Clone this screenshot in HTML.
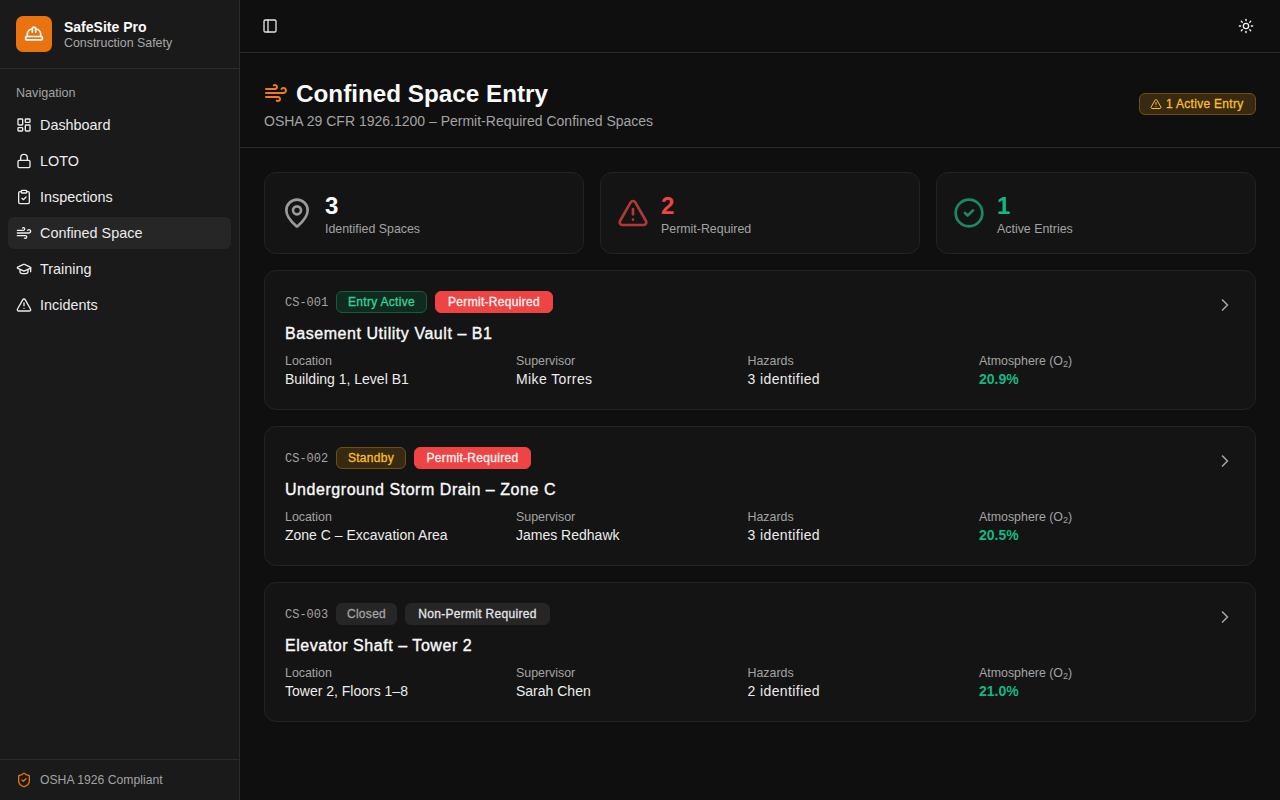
<!DOCTYPE html>
<html><head><meta charset="utf-8">
<style>
*{box-sizing:border-box;margin:0;padding:0}
html,body{width:1280px;height:800px;overflow:hidden;background:#111111;font-family:"Liberation Sans",sans-serif;color:#f5f5f5}
.abs{position:absolute}
svg{display:block;fill:none;stroke:currentColor;stroke-width:2;stroke-linecap:round;stroke-linejoin:round}
#side{position:absolute;left:0;top:0;width:240px;height:800px;background:#1a1a1a;border-right:1px solid #2b2b2b}
#main{position:absolute;left:240px;top:0;width:1040px;height:800px;background:#0f0f0f}
.hline{position:absolute;height:1px;background:#2b2b2b}
.logo{position:absolute;left:16px;top:16px;width:36px;height:36px;border-radius:7px;background:#e8730f;color:#fff}
.brand{position:absolute;left:64px;top:19px;font-size:14px;font-weight:bold;color:#fafafa;white-space:nowrap}
.brand2{position:absolute;left:64px;top:36px;font-size:12.4px;color:#a8a8a8;white-space:nowrap}
.navlbl{position:absolute;left:16px;top:86px;font-size:12.6px;color:#a3a3a3}
.nav{position:absolute;left:8px;width:223px;height:32px;border-radius:6px;color:#ececec;font-size:14.4px}
.nav.active{background:#262626}
.nav svg{position:absolute;left:8px;top:8px}
.nav span{position:absolute;left:32px;top:8px;white-space:nowrap}
.foot{position:absolute;left:40px;top:773px;font-size:12.2px;color:#a3a3a3;white-space:nowrap}

.t{position:absolute;line-height:1;white-space:nowrap}
.card{position:absolute;background:#141414;border:1px solid #222222;border-radius:12px}
.badge{position:absolute;height:22px;border-radius:6px;font-size:12px;font-weight:normal;-webkit-text-stroke:0.3px currentColor;letter-spacing:0.3px;line-height:20px;text-align:center;border:1px solid transparent;white-space:nowrap}
.b-green{background:#0f2a1f;border-color:#1b5a3e;color:#34d399}
.b-red{background:#ef4444;border-color:#ef4444;color:#fff5f5}
.b-amber{background:#382a12;border-color:#6e5014;color:#fbbf24}
.b-grey{background:#262626;border-color:#262626;color:#a3a3a3}
.b-grey2{background:#262626;border-color:#262626;color:#e5e5e5}
.sb{font-weight:normal;-webkit-text-stroke:0.35px currentColor}
.mono{font-family:"Liberation Mono",monospace}
.lbl{font-size:12.4px;color:#a3a3a3}
.val{font-size:14px;color:#ececec}
</style></head>
<body>
<div id="side">
  <div class="logo"><svg class="abs" style="left:8px;top:8px" width="20" height="20" viewBox="0 0 24 24"><path d="M2 18a1 1 0 0 0 1 1h18a1 1 0 0 0 1-1v-2a1 1 0 0 0-1-1H3a1 1 0 0 0-1 1v2z"/><path d="M10 10V5a1 1 0 0 1 1-1h2a1 1 0 0 1 1 1v5"/><path d="M4 15v-3a6 6 0 0 1 6-6"/><path d="M14 6a6 6 0 0 1 6 6v3"/></svg></div>
  <div class="brand">SafeSite Pro</div>
  <div class="brand2">Construction Safety</div>
  <div class="hline" style="left:0;top:68px;width:239px"></div>
  <div class="navlbl">Navigation</div>
  <div class="nav" style="top:109px"><svg width="16" height="16" viewBox="0 0 24 24"><rect width="7" height="9" x="3" y="3" rx="1"/><rect width="7" height="5" x="14" y="3" rx="1"/><rect width="7" height="9" x="14" y="12" rx="1"/><rect width="7" height="5" x="3" y="16" rx="1"/></svg><span>Dashboard</span></div>
  <div class="nav" style="top:145px"><svg width="16" height="16" viewBox="0 0 24 24"><rect width="18" height="11" x="3" y="11" rx="2" ry="2"/><path d="M7 11V7a5 5 0 0 1 10 0v4"/></svg><span>LOTO</span></div>
  <div class="nav" style="top:181px"><svg width="16" height="16" viewBox="0 0 24 24"><rect width="8" height="4" x="8" y="2" rx="1" ry="1"/><path d="M16 4h2a2 2 0 0 1 2 2v14a2 2 0 0 1-2 2H6a2 2 0 0 1-2-2V6a2 2 0 0 1 2-2h2"/><path d="m9 14 2 2 4-4"/></svg><span>Inspections</span></div>
  <div class="nav active" style="top:217px"><svg width="16" height="16" viewBox="0 0 24 24"><path d="M12.8 19.6A2 2 0 1 0 14 16H2"/><path d="M17.5 8a2.5 2.5 0 1 1 2 4H2"/><path d="M9.8 4.4A2 2 0 1 1 11 8H2"/></svg><span>Confined Space</span></div>
  <div class="nav" style="top:253px"><svg width="16" height="16" viewBox="0 0 24 24"><path d="M21.42 10.922a1 1 0 0 0-.019-1.838L12.83 5.18a2 2 0 0 0-1.66 0L2.6 9.08a1 1 0 0 0 0 1.832l8.57 3.908a2 2 0 0 0 1.66 0z"/><path d="M22 10v6"/><path d="M6 12.5V16a6 3 0 0 0 12 0v-3.5"/></svg><span>Training</span></div>
  <div class="nav" style="top:289px"><svg width="16" height="16" viewBox="0 0 24 24"><path d="m21.73 18-8-14a2 2 0 0 0-3.48 0l-8 14A2 2 0 0 0 4 21h16a2 2 0 0 0 1.73-3"/><path d="M12 9v4"/><path d="M12 17h.01"/></svg><span>Incidents</span></div>
  <div class="hline" style="left:0;top:759px;width:239px"></div>
  <svg class="abs" style="left:16px;top:772px;color:#e8730f" width="16" height="16" viewBox="0 0 24 24"><path d="M20 13c0 5-3.5 7.5-7.66 8.95a1 1 0 0 1-.67-.01C7.5 20.5 4 18 4 13V6a1 1 0 0 1 1-1c2 0 4.5-1.2 6.24-2.72a1.17 1.17 0 0 1 1.52 0C14.51 3.81 17 5 19 5a1 1 0 0 1 1 1z"/><path d="m9 12 2 2 4-4"/></svg>
  <div class="foot">OSHA 1926 Compliant</div>
</div>
<div id="main">
<svg class="abs" style="left:22px;top:18px;color:#e5e5e5" width="16" height="16" viewBox="0 0 24 24"><rect width="18" height="18" x="3" y="3" rx="2"/><path d="M9 3v18"/></svg>
<svg class="abs" style="left:998px;top:18px;color:#f0f0f0" width="16" height="16" viewBox="0 0 24 24"><circle cx="12" cy="12" r="4"/><path d="M12 2v2"/><path d="M12 20v2"/><path d="m4.93 4.93 1.41 1.41"/><path d="m17.66 17.66 1.41 1.41"/><path d="M2 12h2"/><path d="M20 12h2"/><path d="m6.34 17.66-1.41 1.41"/><path d="m19.07 4.93-1.41 1.41"/></svg>
<div class="hline" style="left:0;top:52px;width:1040px"></div>
<svg class="abs" style="left:24px;top:81px;color:#f07c12" width="24" height="24" viewBox="0 0 24 24"><path d="M12.8 19.6A2 2 0 1 0 14 16H2"/><path d="M17.5 8a2.5 2.5 0 1 1 2 4H2"/><path d="M9.8 4.4A2 2 0 1 1 11 8H2"/></svg>
<div class="t" style="left:56px;top:82px;font-size:24.25px;font-weight:bold;color:#fafafa">Confined Space Entry</div>
<div class="t" style="left:24px;top:114px;font-size:14px;color:#a3a3a3">OSHA 29 CFR 1926.1200 – Permit-Required Confined Spaces</div>
<div class="badge b-amber" style="left:899px;top:93px;width:117px"><svg class="abs" style="left:10px;top:4px" width="12" height="12" viewBox="0 0 24 24"><path d="m21.73 18-8-14a2 2 0 0 0-3.48 0l-8 14A2 2 0 0 0 4 21h16a2 2 0 0 0 1.73-3"/><path d="M12 9v4"/><path d="M12 17h.01"/></svg><span style="position:absolute;left:26px;top:0">1 Active Entry</span></div>
<div class="hline" style="left:0;top:147px;width:1040px"></div>
<div class="card" style="left:24px;top:172px;width:320px;height:82px"></div>
<svg class="abs" style="left:41px;top:197px;color:#9a9a9a" width="32" height="32" viewBox="0 0 24 24"><path d="M20 10c0 4.993-5.539 10.193-7.399 11.799a1 1 0 0 1-1.202 0C9.539 20.193 4 14.993 4 10a8 8 0 0 1 16 0"/><circle cx="12" cy="10" r="3"/></svg>
<div class="t" style="left:85px;top:194px;font-size:24px;font-weight:bold;color:#fafafa">3</div>
<div class="t lbl" style="left:85px;top:223px">Identified Spaces</div>
<div class="card" style="left:360px;top:172px;width:320px;height:82px"></div>
<svg class="abs" style="left:377px;top:197px;color:#b23838" width="32" height="32" viewBox="0 0 24 24"><path d="m21.73 18-8-14a2 2 0 0 0-3.48 0l-8 14A2 2 0 0 0 4 21h16a2 2 0 0 0 1.73-3"/><path d="M12 9v4"/><path d="M12 17h.01"/></svg>
<div class="t" style="left:421px;top:194px;font-size:24px;font-weight:bold;color:#ef4444">2</div>
<div class="t lbl" style="left:421px;top:223px">Permit-Required</div>
<div class="card" style="left:696px;top:172px;width:320px;height:82px"></div>
<svg class="abs" style="left:713px;top:197px;color:#1a8a62" width="32" height="32" viewBox="0 0 24 24"><circle cx="12" cy="12" r="10"/><path d="m9 12 2 2 4-4"/></svg>
<div class="t" style="left:757px;top:194px;font-size:24px;font-weight:bold;color:#10b981">1</div>
<div class="t lbl" style="left:757px;top:223px">Active Entries</div>
<div class="card" style="left:24px;top:270px;width:992px;height:140px"></div>
<div class="t mono" style="left:45px;top:297px;font-size:12px;color:#a3a3a3">CS-001</div>
<div class="badge b-green" style="left:96px;top:291px;width:91px">Entry Active</div>
<div class="badge b-red" style="left:195px;top:291px;width:118px">Permit-Required</div>
<div class="t sb" style="left:45px;top:326px;font-size:16px;letter-spacing:0.55px;color:#fafafa">Basement Utility Vault – B1</div>
<div class="t lbl" style="left:45px;top:355px">Location</div>
<div class="t val" style="left:45px;top:372px;letter-spacing:0px">Building 1, Level B1</div>
<div class="t lbl" style="left:276px;top:355px">Supervisor</div>
<div class="t val" style="left:276px;top:372px;letter-spacing:0.4px">Mike Torres</div>
<div class="t lbl" style="left:507.5px;top:355px">Hazards</div>
<div class="t val" style="left:507.5px;top:372px;letter-spacing:0.4px">3 identified</div>
<div class="t lbl" style="left:739px;top:355px">Atmosphere (O<span style="font-size:9px;position:relative;top:2px">2</span>)</div>
<div class="t" style="left:739px;top:372px;font-size:14px;font-weight:bold;color:#10b981">20.9%</div>
<svg class="abs" style="left:975px;top:295px;color:#a3a3a3" width="20" height="20" viewBox="0 0 24 24"><path d="m9 18 6-6-6-6"/></svg>
<div class="card" style="left:24px;top:426px;width:992px;height:140px"></div>
<div class="t mono" style="left:45px;top:453px;font-size:12px;color:#a3a3a3">CS-002</div>
<div class="badge b-amber" style="left:96px;top:447px;width:70px">Standby</div>
<div class="badge b-red" style="left:174px;top:447px;width:117px">Permit-Required</div>
<div class="t sb" style="left:45px;top:482px;font-size:16px;letter-spacing:0.55px;color:#fafafa">Underground Storm Drain – Zone C</div>
<div class="t lbl" style="left:45px;top:511px">Location</div>
<div class="t val" style="left:45px;top:528px;letter-spacing:0px">Zone C – Excavation Area</div>
<div class="t lbl" style="left:276px;top:511px">Supervisor</div>
<div class="t val" style="left:276px;top:528px;letter-spacing:0px">James Redhawk</div>
<div class="t lbl" style="left:507.5px;top:511px">Hazards</div>
<div class="t val" style="left:507.5px;top:528px;letter-spacing:0.4px">3 identified</div>
<div class="t lbl" style="left:739px;top:511px">Atmosphere (O<span style="font-size:9px;position:relative;top:2px">2</span>)</div>
<div class="t" style="left:739px;top:528px;font-size:14px;font-weight:bold;color:#10b981">20.5%</div>
<svg class="abs" style="left:975px;top:451px;color:#a3a3a3" width="20" height="20" viewBox="0 0 24 24"><path d="m9 18 6-6-6-6"/></svg>
<div class="card" style="left:24px;top:582px;width:992px;height:140px"></div>
<div class="t mono" style="left:45px;top:609px;font-size:12px;color:#a3a3a3">CS-003</div>
<div class="badge b-grey" style="left:96px;top:603px;width:61px">Closed</div>
<div class="badge b-grey2" style="left:165px;top:603px;width:145px">Non-Permit Required</div>
<div class="t sb" style="left:45px;top:638px;font-size:16px;letter-spacing:0.55px;color:#fafafa">Elevator Shaft – Tower 2</div>
<div class="t lbl" style="left:45px;top:667px">Location</div>
<div class="t val" style="left:45px;top:684px;letter-spacing:0px">Tower 2, Floors 1–8</div>
<div class="t lbl" style="left:276px;top:667px">Supervisor</div>
<div class="t val" style="left:276px;top:684px;letter-spacing:0px">Sarah Chen</div>
<div class="t lbl" style="left:507.5px;top:667px">Hazards</div>
<div class="t val" style="left:507.5px;top:684px;letter-spacing:0.4px">2 identified</div>
<div class="t lbl" style="left:739px;top:667px">Atmosphere (O<span style="font-size:9px;position:relative;top:2px">2</span>)</div>
<div class="t" style="left:739px;top:684px;font-size:14px;font-weight:bold;color:#10b981">21.0%</div>
<svg class="abs" style="left:975px;top:607px;color:#a3a3a3" width="20" height="20" viewBox="0 0 24 24"><path d="m9 18 6-6-6-6"/></svg>
</div>
</body></html>
